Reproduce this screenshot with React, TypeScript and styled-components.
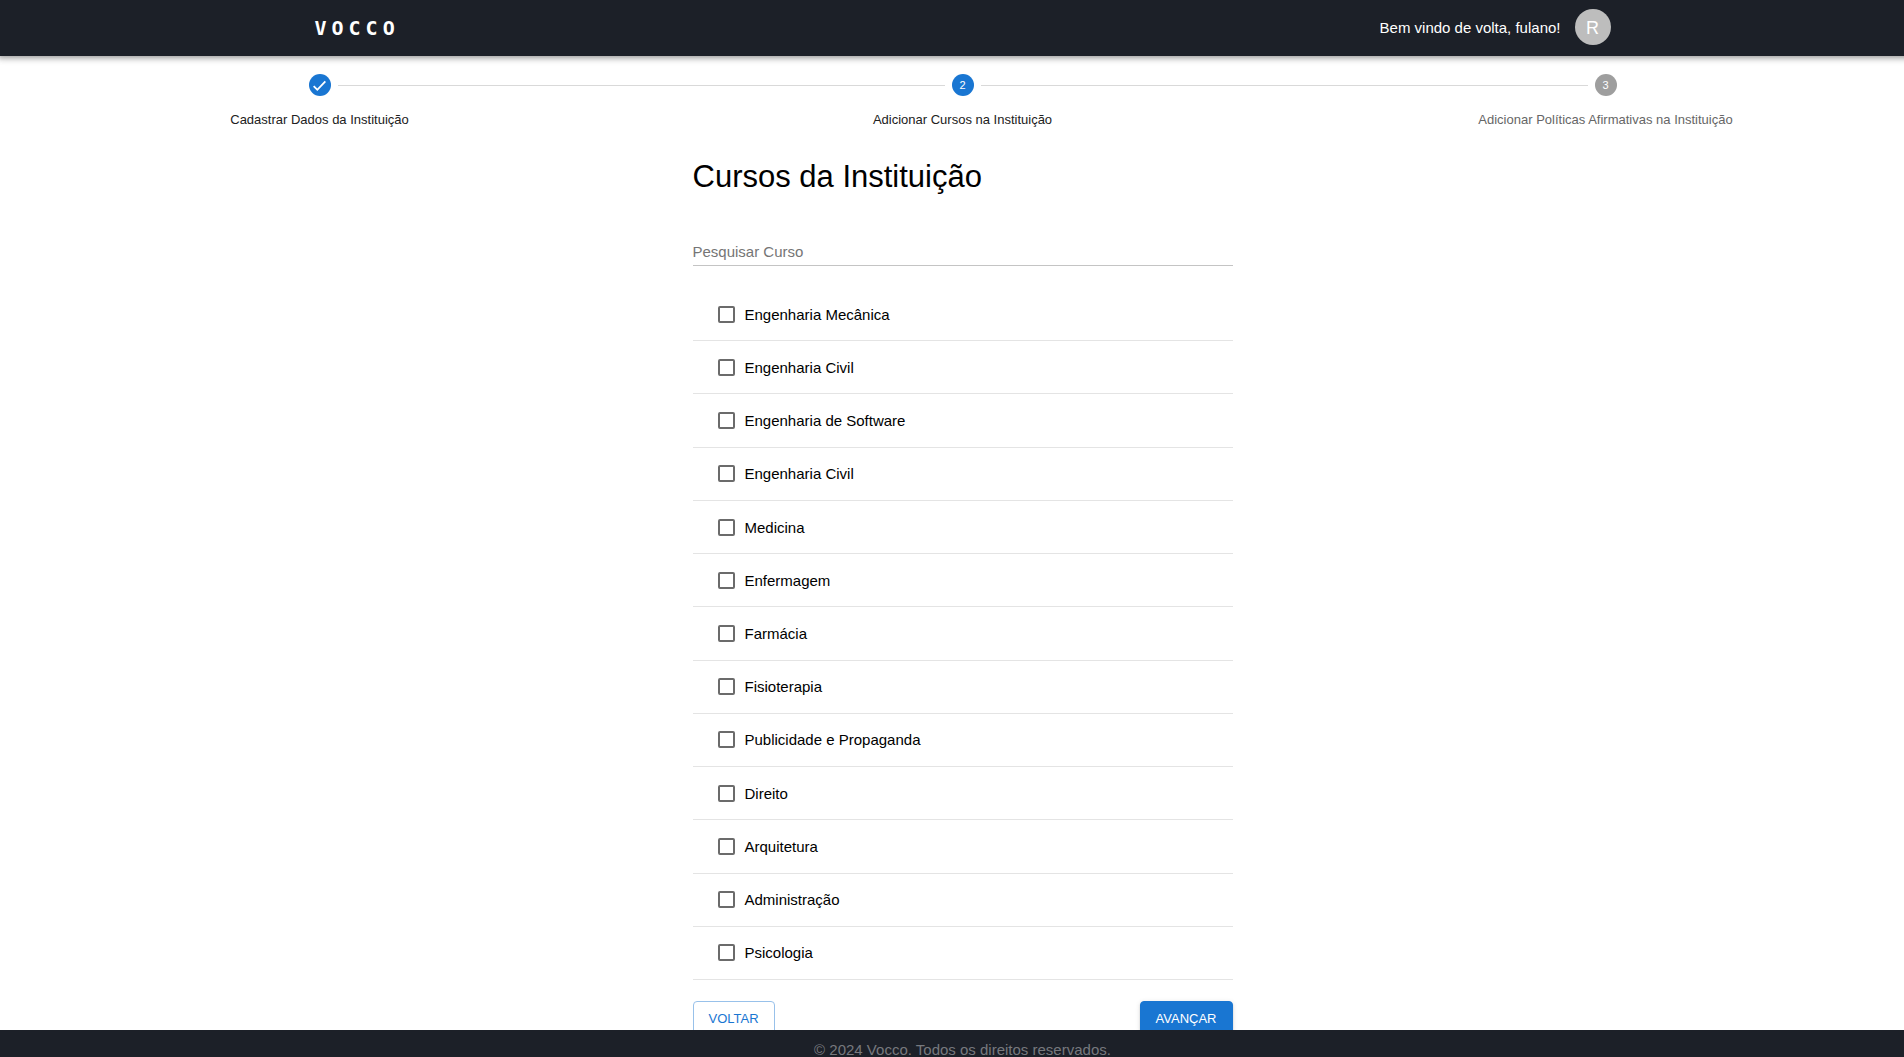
import React, { useState } from "react";
import styled, { createGlobalStyle, css } from "styled-components";

const GlobalStyle = createGlobalStyle`
  *, *::before, *::after { box-sizing: border-box; }
  body {
    margin: 0;
    background: #fff;
    color: #000;
    font-family: "Liberation Sans", Helvetica, Arial, sans-serif;
    font-size: 15px;
    line-height: 22px;
  }
`;

const Page = styled.div`
  height: 100vh;
  overflow: hidden;
`;

const Canvas = styled.div`
  display: flex;
  flex-direction: column;
  height: 100%;
  margin: 0 -23px 0 -2px;
`;

const Header = styled.header`
  flex: none;
  background: #1c2028;
  color: #fff;
  box-shadow: 0 2px 4px -1px rgba(0, 0, 0, 0.2), 0 4px 5px rgba(0, 0, 0, 0.14),
    0 1px 9px rgba(0, 0, 0, 0.12);
`;

const Toolbar = styled.div`
  display: flex;
  align-items: center;
  justify-content: space-between;
  max-width: 1382px;
  height: 56px;
  margin: 0 auto;
  padding: 0 43px;
`;

const Brand = styled.a`
  color: inherit;
  font-family: "DejaVu Sans Mono", monospace;
  font-size: 20px;
  font-weight: 700;
  letter-spacing: 5px;
  text-decoration: none;
`;

const Account = styled.div`
  display: flex;
  align-items: center;
  gap: 14px;
`;

const Avatar = styled.button`
  width: 36px;
  height: 36px;
  margin-bottom: 2px;
  padding: 2px 0 0;
  border: 0;
  border-radius: 50%;
  background: #bdbdbd;
  color: #fff;
  font: inherit;
  font-size: 18px;
  cursor: pointer;
`;

const Main = styled.main`
  flex: 1;
  min-height: 0;
  overflow: hidden;
  padding-top: 18px;
`;

const Stepper = styled.ol`
  display: grid;
  grid-template-columns: repeat(3, 1fr);
  margin: 0;
  padding: 0;
  list-style: none;
`;

const Step = styled.li`
  display: flex;
  flex-direction: column;
  gap: 15px;
`;

const Track = styled.div`
  display: flex;
  align-items: center;
  gap: 7px;
`;

const Connector = styled.span<{ $hidden?: boolean }>`
  flex: 1;
  height: 1px;
  margin-top: 1px;
  background: ${(p) => (p.$hidden ? "transparent" : "#d9d9d9")};
`;

const StepMark = styled.span<{ $active: boolean }>`
  display: flex;
  align-items: center;
  justify-content: center;
  width: 22px;
  height: 22px;
  border-radius: 50%;
  background: ${(p) => (p.$active ? "#1976d2" : "#9e9e9e")};
  color: #fff;
  font-size: 11px;
`;

const StepLabel = styled.span<{ $active: boolean }>`
  color: ${(p) => (p.$active ? "#212121" : "#666")};
  font-size: 13px;
  line-height: 18px;
  text-align: center;
`;

const Content = styled.form`
  max-width: 540px;
  margin: 0 auto;
`;

const Title = styled.h1`
  margin: 28px 0 43px;
  font-size: 31px;
  font-weight: 400;
  line-height: 40px;
`;

const Search = styled.input`
  display: block;
  width: 100%;
  height: 26px;
  padding: 0 0 2px;
  border: 0;
  border-bottom: 1px solid #c4c4c4;
  border-radius: 0;
  outline: 0;
  background: none;
  color: #000;
  font: inherit;
  &::placeholder { color: #757575; opacity: 1; }
`;

const CourseList = styled.ul`
  display: grid;
  grid-auto-rows: 1fr;
  min-height: 692px;
  margin: 22px 0 0;
  padding: 0;
  list-style: none;
`;

const CourseRow = styled.li`
  display: flex;
  border-bottom: 1px solid #e4e4e4;
`;

const CourseLabel = styled.label`
  display: flex;
  flex: 1;
  align-items: center;
  gap: 10px;
  padding-left: 25px;
  cursor: pointer;
`;

const CourseName = styled.span`
  padding-top: 1px;
`;

const Checkbox = styled.input`
  width: 17px;
  height: 17px;
  margin: 0;
  appearance: none;
  border: 2px solid #6b6b6b;
  border-radius: 2px;
  &:checked {
    border-color: #1976d2;
    background: #1976d2;
  }
`;

const Actions = styled.div`
  display: flex;
  justify-content: space-between;
  padding-top: 21px;
`;

const Button = styled.button<{ $filled?: boolean }>`
  height: 33px;
  padding: 2px 15px 0;
  border: 1px solid #98c1ea;
  border-radius: 4px;
  background: #fff;
  color: #1976d2;
  font: inherit;
  font-size: 13px;
  text-transform: uppercase;
  cursor: pointer;
  ${(p) =>
    p.$filled &&
    css`
      border-color: #1976d2;
      background: #1976d2;
      color: #fff;
      box-shadow: 0 3px 1px -2px rgba(0, 0, 0, 0.2), 0 2px 2px rgba(0, 0, 0, 0.14),
        0 1px 5px rgba(0, 0, 0, 0.12);
    `}
`;

const Footer = styled.footer`
  flex: none;
  height: 27px;
  padding-top: 10px;
  overflow: hidden;
  background: #1c2028;
  color: #77797e;
  line-height: 20px;
  text-align: center;
`;

const steps = [
  { label: "Cadastrar Dados da Instituição", done: true, active: true },
  { label: "Adicionar Cursos na Instituição", done: false, active: true },
  { label: "Adicionar Políticas Afirmativas na Instituição", done: false, active: false },
];

const courses = [
  "Engenharia Mecânica",
  "Engenharia Civil",
  "Engenharia de Software",
  "Engenharia Civil",
  "Medicina",
  "Enfermagem",
  "Farmácia",
  "Fisioterapia",
  "Publicidade e Propaganda",
  "Direito",
  "Arquitetura",
  "Administração",
  "Psicologia",
];

function CheckIcon() {
  return (
    <svg width="13" height="13" viewBox="3 3 18 18" fill="#fff" aria-hidden="true">
      <path d="M9 16.2 4.8 12l-1.8 1.8L9 19.6 21 7.2l-1.8-1.8z" />
    </svg>
  );
}

export default function App() {
  const [query, setQuery] = useState("");
  const visible = courses.filter((c) => c.toLowerCase().includes(query.toLowerCase()));

  return (
    <Page>
      <GlobalStyle />
      <Canvas>
        <Header>
          <Toolbar>
            <Brand href="#">VOCCO</Brand>
            <Account>
              <span>Bem vindo de volta, fulano!</span>
              <Avatar type="button">R</Avatar>
            </Account>
          </Toolbar>
        </Header>
        <Main>
          <Stepper>
            {steps.map((step, i) => (
              <Step key={step.label}>
                <Track>
                  <Connector $hidden={i === 0} />
                  <StepMark $active={step.active}>{step.done ? <CheckIcon /> : i + 1}</StepMark>
                  <Connector $hidden={i === steps.length - 1} />
                </Track>
                <StepLabel $active={step.active}>{step.label}</StepLabel>
              </Step>
            ))}
          </Stepper>
          <Content onSubmit={(e) => e.preventDefault()}>
            <Title>Cursos da Instituição</Title>
            <Search
              type="text"
              aria-label="Pesquisar Curso"
              placeholder="Pesquisar Curso"
              value={query}
              onChange={(e) => setQuery(e.target.value)}
            />
            <CourseList>
              {visible.map((course, i) => (
                <CourseRow key={i}>
                  <CourseLabel>
                    <Checkbox type="checkbox" />
                    <CourseName>{course}</CourseName>
                  </CourseLabel>
                </CourseRow>
              ))}
            </CourseList>
            <Actions>
              <Button type="button">Voltar</Button>
              <Button type="submit" $filled>
                Avançar
              </Button>
            </Actions>
          </Content>
        </Main>
        <Footer>© 2024 Vocco. Todos os direitos reservados.</Footer>
      </Canvas>
    </Page>
  );
}
